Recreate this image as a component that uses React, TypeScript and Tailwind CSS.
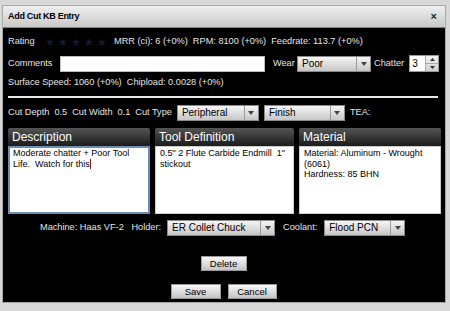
import { ReactNode } from 'react';

function Select({ value, width }: { value: string; width: string }) {
  return (
    <div
      className={`${width} shrink-0 h-[16px] flex border border-[#8a8a8a] bg-gradient-to-b from-[#f6f6f6] to-[#c6c6c6] text-black`}
    >
      <div className="flex-1 pl-[4px] leading-[14px] text-[10px] truncate">{value}</div>
      <div className="w-[14px] border-l border-[#9a9a9a] flex items-center justify-center">
        <svg width="6" height="4" viewBox="0 0 6 4">
          <path d="M0 0h6L3 4z" fill="#444" />
        </svg>
      </div>
    </div>
  );
}

function Button({ label, width }: { label: string; width: string }) {
  return (
    <div
      className={`${width} h-[15px] border border-[#9a9a9a] bg-gradient-to-b from-[#f8f8f8] to-[#c4c4c4] text-black text-center leading-[13px] text-[9.5px]`}
    >
      {label}
    </div>
  );
}

function Panel({
  title,
  width,
  focused,
  children,
}: {
  title: string;
  width: string;
  focused?: boolean;
  children: ReactNode;
}) {
  return (
    <div className={`${width} shrink-0 flex flex-col`}>
      <div className="h-[18px] bg-gradient-to-b from-[#555] to-[#1c1c1c] text-white text-[12px] leading-[18px] pl-[4px] rounded-t-[2px]">
        {title}
      </div>
      <div
        className={`flex-1 bg-white text-black text-[9px] leading-[10.5px] whitespace-normal ${
          focused ? 'border-2 border-[#6f8db0] px-[3px] py-0' : 'border border-[#ccc] px-[4px] py-[1px]'
        }`}
      >
        {children}
      </div>
    </div>
  );
}

export default function App() {
  return (
    <div
      className="w-[450px] h-[311px] bg-[#d8d8d8] pt-[5px] pl-[2px] text-[9.2px] whitespace-nowrap"
      style={{ fontFamily: '"Liberation Sans", Arial, sans-serif' }}
    >
      <div className="w-[444px] h-[298px] border border-[#a8a8a8] bg-black flex flex-col">
        {/* Title bar */}
        <div className="h-[22px] flex items-center justify-between px-[5px] bg-gradient-to-b from-[#efefef] to-[#c9c9c9] border-b border-[#888]">
          <span className="font-bold text-[9px] tracking-[-0.3px] text-black">Add Cut KB Entry</span>
          <span className="text-[11px] font-bold text-[#222] mr-[3px]">×</span>
        </div>

        {/* Body */}
        <div className="flex-1 flex flex-col pl-[5px] pr-[4px] text-[#e6e6e6]">
          <div className="h-[16px] mt-[6px] flex items-center">
            <span className="w-[37px]">Rating</span>
            <span className="flex gap-[3px] text-[#101b33] text-[11px]">
              <span>★</span>
              <span>★</span>
              <span>★</span>
              <span>★</span>
              <span>★</span>
            </span>
            <span className="ml-[7px]">MRR (ci): 6 (+0%)&nbsp;&nbsp;RPM: 8100 (+0%)&nbsp;&nbsp;Feedrate: 113.7 (+0%)</span>
          </div>

          <div className="h-[17px] mt-[5px] flex items-center">
            <span className="w-[52px] shrink-0">Comments</span>
            <div className="w-[205px] shrink-0 h-[16px] bg-white border border-[#bbb]" />
            <span className="ml-[8px] w-[24px] shrink-0">Wear</span>
            <Select value="Poor" width="w-[74px]" />
            <span className="ml-[3px]">Chatter</span>
            <div className="ml-[5px] shrink-0 flex h-[17px] border border-[#999] bg-white text-black">
              <div className="w-[15px] pl-[2px] leading-[15px] text-[10px]">3</div>
              <div className="w-[13px] border-l border-[#aaa] flex flex-col bg-gradient-to-b from-[#f4f4f4] to-[#d0d0d0]">
                <div className="flex-1 flex items-center justify-center border-b border-[#aaa]">
                  <svg width="5" height="3" viewBox="0 0 5 3">
                    <path d="M0 3h5L2.5 0z" fill="#333" />
                  </svg>
                </div>
                <div className="flex-1 flex items-center justify-center">
                  <svg width="5" height="3" viewBox="0 0 5 3">
                    <path d="M0 0h5L2.5 3z" fill="#333" />
                  </svg>
                </div>
              </div>
            </div>
          </div>

          <div className="h-[16px] mt-[3px] flex items-center">
            Surface Speed: 1060 (+0%)&nbsp;&nbsp;Chipload: 0.0028 (+0%)
          </div>

          <div className="mt-[5px] h-[2px] w-[430px] bg-[#e8e8e8]" />

          <div className="h-[16px] mt-[7px] flex items-center gap-[5px]">
            <span>Cut Depth</span>
            <span>0.5</span>
            <span>Cut Width</span>
            <span>0.1</span>
            <span>Cut Type</span>
            <Select value="Peripheral" width="w-[82px]" />
            <Select value="Finish" width="w-[81px]" />
            <span>TEA:</span>
          </div>

          <div className="mt-[7px] h-[86px] flex gap-[5px]">
            <Panel title="Description" width="w-[142px]" focused>
              Moderate chatter + Poor Tool Life.&nbsp; Watch for this
              <span className="inline-block w-[1.5px] h-[10px] bg-[#8a1a1a] align-[-2px]" />
            </Panel>
            <Panel title="Tool Definition" width="w-[139px]">
              0.5" 2 Flute Carbide Endmill&nbsp; 1" stickout
            </Panel>
            <Panel title="Material" width="w-[142px]">
              Material: Aluminum - Wrought (6061)
              <br />
              Hardness: 85 BHN
            </Panel>
          </div>

          <div className="h-[16px] mt-[6px] flex items-center pl-[32px]">
            <span>Machine: Haas VF-2&nbsp;&nbsp;&nbsp;Holder:</span>
            <div className="ml-[6px]">
              <Select value="ER Collet Chuck" width="w-[108px]" />
            </div>
            <span className="ml-[8px]">Coolant:</span>
            <div className="ml-[7px]">
              <Select value="Flood PCN" width="w-[81px]" />
            </div>
          </div>

          <div className="mt-[20px] flex justify-center pr-[2px]">
            <Button label="Delete" width="w-[46px]" />
          </div>

          <div className="mt-[13px] flex justify-center gap-[7px] pr-[2px]">
            <Button label="Save" width="w-[50px]" />
            <Button label="Cancel" width="w-[49px]" />
          </div>
        </div>
      </div>
    </div>
  );
}
